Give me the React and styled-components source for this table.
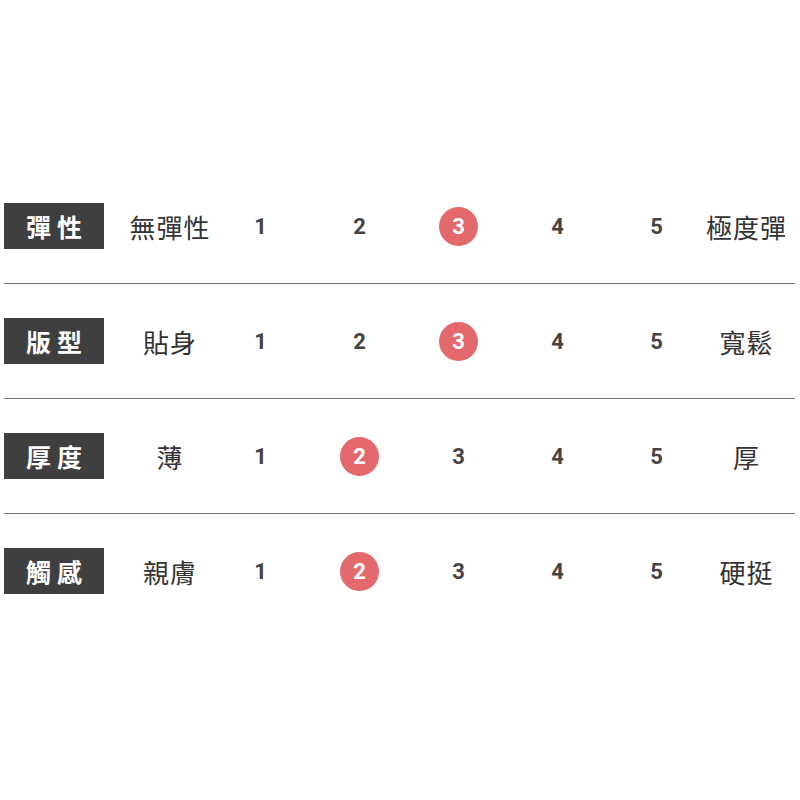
import React from "react";
import styled, { createGlobalStyle } from "styled-components";

const GlobalStyle = createGlobalStyle`
  html, body {
    margin: 0;
    padding: 0;
    background: #ffffff;
  }
  body {
    font-family: "Noto Sans CJK TC", "Noto Sans", sans-serif;
  }
`;

const rows = [
  { label: "彈性", low: "無彈性", high: "極度彈", value: 3 },
  { label: "版型", low: "貼身", high: "寬鬆", value: 3 },
  { label: "厚度", low: "薄", high: "厚", value: 2 },
  { label: "觸感", low: "親膚", high: "硬挺", value: 2 },
];

export default function App() {
  return (
    <>
      <GlobalStyle />
      <Page>
        <Table>
          {rows.map((row) => (
            <Row key={row.label}>
              <Label>{row.label}</Label>
              <Low>{row.low}</Low>
              {[1, 2, 3, 4, 5].map((n) => (
                <Cell key={n}>
                  <Num $active={n === row.value}>{n}</Num>
                </Cell>
              ))}
              <High>{row.high}</High>
            </Row>
          ))}
        </Table>
      </Page>
    </>
  );
}

const Page = styled.div`
  width: 800px;
  height: 800px;
  padding-top: 169px;
  box-sizing: border-box;
`;

const Table = styled.div`
  margin-left: 4px;
  width: 791px;
  display: flex;
  flex-direction: column;
`;

const Row = styled.div`
  display: grid;
  grid-template-columns: 100px 107px repeat(5, 99px) 81px;
  align-items: center;
  padding: 34px 0 34px;
  border-bottom: 1px solid #767676;
  &:last-child {
    border-bottom: none;
  }
`;

const Label = styled.div`
  height: 46px;
  background: #3f3f3f;
  color: #ffffff;
  display: flex;
  align-items: center;
  justify-content: center;
  font-family: "Noto Sans CJK TC", sans-serif;
  font-weight: 700;
  font-size: 25px;
  letter-spacing: 6px;
  padding-left: 6px;
  box-sizing: border-box;
`;

const Low = styled.div`
  padding-left: 25px;
  text-align: center;
  font-family: "Noto Sans CJK TC", sans-serif;
  font-size: 26px;
  letter-spacing: 1px;
  color: #333333;
`;

const High = styled(Low)`
  padding-left: 0;
`;

const Cell = styled.div`
  display: flex;
  justify-content: center;
  align-items: center;
`;

const Num = styled.span`
  width: 39px;
  height: 39px;
  border-radius: 50%;
  display: flex;
  align-items: center;
  justify-content: center;
  font-family: "Roboto", "Liberation Sans", sans-serif;
  font-weight: 700;
  font-size: 22px;
  color: ${(p) => (p.$active ? "#ffffff" : "#444444")};
  background: ${(p) => (p.$active ? "#e4696d" : "transparent")};
`;
